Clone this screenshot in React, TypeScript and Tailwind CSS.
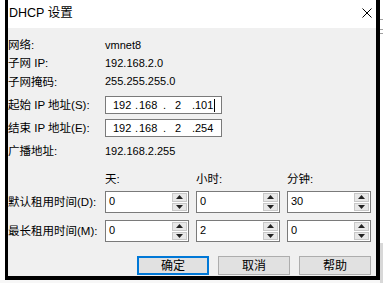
import React from "react";

const cjk = { fontFamily: '"Liberation Sans", "Noto Sans CJK SC", sans-serif' };
const num = { fontFamily: '"Liberation Sans", Arial, sans-serif' };

function InfoRow({ label, value, h }: { label: string; value: string; h: string }) {
  return (
    <div className={`flex items-center ${h}`}>
      <div className="w-[97px] text-[11.5px] leading-[14px] text-black whitespace-nowrap" style={cjk}>{label}</div>
      <div className="text-[11px] leading-[13px] text-black" style={num}>{value}</div>
    </div>
  );
}

function IpBox({ last, cursor }: { last: string; cursor?: boolean }) {
  return (
    <div className="w-[117px] h-[18px] border border-[#7a7a7a] bg-white flex items-center pl-[7px] text-[11px] leading-[13px] text-black" style={num}>
      <span className="w-[22px]">192</span>
      <span className="w-[4px]">.</span>
      <span className="w-[24px]">168</span>
      <span className="w-[12px]">.</span>
      <span className="w-[17px]">2</span>
      <span className="w-[3px]">.</span>
      <span>{last}</span>
      {cursor && <span className="ml-[1px] w-[1px] h-[13px] bg-black" />}
    </div>
  );
}

function IpRow({ label, last, cursor }: { label: string; last: string; cursor?: boolean }) {
  return (
    <div className="flex items-center h-[18px]">
      <div className="w-[97px] text-[11.5px] leading-[14px] text-black whitespace-nowrap" style={cjk}>{label}</div>
      <IpBox last={last} cursor={cursor} />
    </div>
  );
}

function Spin({ value }: { value: string }) {
  return (
    <div className="w-[84px] h-[22px] border border-[#7a7a7a] bg-white flex">
      <div className="flex-1 pl-[3px] pt-[3px] text-[11px] leading-[13px] text-black" style={num}>{value}</div>
      <div className="w-[15px] my-[1px] mr-[1px] flex flex-col gap-[1px]">
        <div className="flex-1 bg-[#e8e8e8] border border-[#c8c8c8] flex items-center justify-center">
          <svg width="7" height="4" viewBox="0 0 7 4"><polygon points="3.5,0 7,4 0,4" fill="#222" /></svg>
        </div>
        <div className="flex-1 bg-[#e8e8e8] border border-[#c8c8c8] flex items-center justify-center">
          <svg width="7" height="4" viewBox="0 0 7 4"><polygon points="0,0 7,0 3.5,4" fill="#222" /></svg>
        </div>
      </div>
    </div>
  );
}

function SpinRow({ label, values }: { label: string; values: string[] }) {
  return (
    <div className="flex items-center h-[22px]">
      <div className="w-[97px] text-[11.5px] leading-[14px] text-black whitespace-nowrap" style={cjk}>{label}</div>
      <div className="flex gap-[7px]">
        {values.map((v, i) => (
          <Spin key={i} value={v} />
        ))}
      </div>
    </div>
  );
}

function Btn({ text, primary }: { text: string; primary?: boolean }) {
  return (
    <div
      className={`w-[72px] h-[19px] flex items-center justify-center bg-[#e1e1e1] text-[12px] leading-[14px] text-black ${
        primary ? "border-2 border-[#0078d7]" : "border border-[#adadad]"
      }`}
      style={cjk}
    >
      {text}
    </div>
  );
}

export default function App() {
  return (
    <div className="w-[383px] h-[283px] bg-[#f7f7f7] flex overflow-hidden">
      <div className="w-[5px] h-[280px] bg-white" />
      <div className="w-[375px] h-[280px] border-l-[3px] border-r-[4px] border-b-[4px] border-black flex flex-col bg-[#f0f0f0]">
        <div className="h-[28px] bg-white flex justify-between pl-[1px] pr-[4px]">
          <div className="pt-[6px] text-[12.5px] leading-[14px] text-black" style={cjk}>DHCP 设置</div>
          <svg className="mt-[8px]" width="10" height="10" viewBox="0 0 10 10">
            <path d="M0.5 0.5 L9.5 9.5 M9.5 0.5 L0.5 9.5" stroke="#000" strokeWidth="1" />
          </svg>
        </div>
        <div className="flex flex-col pt-[8px]">
          <InfoRow label="网络:" value="vmnet8" h="h-[18px]" />
          <InfoRow label="子网 IP:" value="192.168.2.0" h="h-[18px]" />
          <InfoRow label="子网掩码:" value="255.255.255.0" h="h-[19px]" />
          <div className="mt-[5px]">
            <IpRow label="起始 IP 地址(S):" last="101" cursor />
          </div>
          <div className="mt-[5px]">
            <IpRow label="结束 IP 地址(E):" last="254" />
          </div>
          <div className="mt-[5px]">
            <InfoRow label="广播地址:" value="192.168.2.255" h="h-[18px]" />
          </div>
          <div className="mt-[10px] h-[18px] flex items-center text-[11.5px] leading-[14px] text-black" style={cjk}>
            <div className="w-[97px]" />
            <div className="w-[84px]">天:</div>
            <div className="w-[7px]" />
            <div className="w-[84px]">小时:</div>
            <div className="w-[7px]" />
            <div className="w-[84px]">分钟:</div>
          </div>
          <div className="mt-[3px]">
            <SpinRow label="默认租用时间(D):" values={["0", "0", "30"]} />
          </div>
          <div className="mt-[7px]">
            <SpinRow label="最长租用时间(M):" values={["0", "2", "0"]} />
          </div>
          <div className="mt-[14px] flex gap-[9px] pl-[129px]">
            <Btn text="确定" primary />
            <Btn text="取消" />
            <Btn text="帮助" />
          </div>
        </div>
      </div>
      <div className="flex-1 h-[283px] bg-white flex flex-col">
        <div className="h-[19px]" />
        <div className="h-[1px] bg-[#a0a0a0]" />
        <div className="h-[9px]" />
        <div className="h-[1px] bg-[#a0a0a0]" />
        <div className="h-[3px]" />
        <div className="h-[1px] bg-[#a0a0a0]" />
        <div className="flex-1" />
        <div className="h-[40px] bg-[#d8d8d8]" />
      </div>
    </div>
  );
}
